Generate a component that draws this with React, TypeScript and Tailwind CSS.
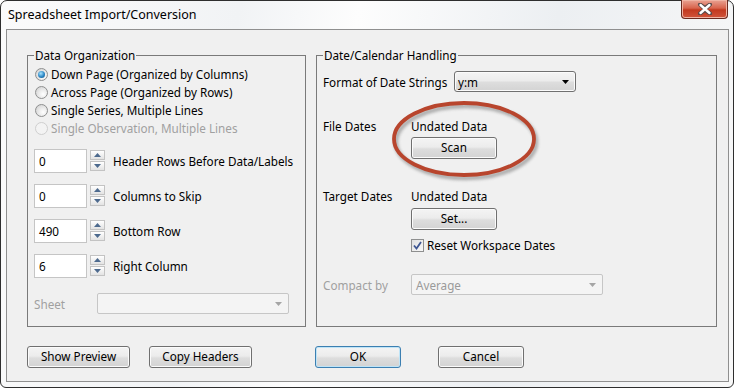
import React from 'react';

const btnBase =
  'flex h-[22px] items-center justify-center rounded-[3px] border text-[11.7px] leading-none text-black bg-[linear-gradient(#f4f4f4,#ececec_45%,#dddddd_55%,#d3d3d3)]';

function Button({ children, className = '' }: { children: React.ReactNode; className?: string }) {
  return (
    <div className={`${btnBase} border-[#707070] shadow-[inset_0_0_0_1px_#fbfbfb] ${className}`}>
      {children}
    </div>
  );
}

function Radio({ checked, disabled }: { checked?: boolean; disabled?: boolean }) {
  return (
    <span
      className={`flex h-[13px] w-[13px] shrink-0 items-center justify-center rounded-full border ${
        disabled
          ? 'border-[#cfcfcf] bg-[#f3f3f3]'
          : 'border-[#8e8f8f] bg-[radial-gradient(circle_at_65%_65%,#ffffff,#e4e4e4_55%,#c9c9c9)]'
      }`}
    >
      {checked && (
        <span className="h-[7px] w-[7px] rounded-full bg-[radial-gradient(circle_at_40%_35%,#a6e3ff,#2b86c4_55%,#0f4c7e)]" />
      )}
    </span>
  );
}

function Arrow({ up, color = '#4d6a8e' }: { up?: boolean; color?: string }) {
  return (
    <svg width="7" height="4" viewBox="0 0 7 4">
      <path d={up ? 'M0 4 L3.5 0 L7 4 Z' : 'M0 0 L3.5 4 L7 0 Z'} fill={color} />
    </svg>
  );
}

function SpinRow({ value, label }: { value: string; label: string }) {
  return (
    <div className="flex h-[24px] items-start">
      <div className="flex h-[24px] w-[53px] items-center border border-[#c5c5c5] bg-white pl-[4px] text-black">
        {value}
      </div>
      <div className="ml-[3px] mt-[1px] flex w-[15px] flex-col gap-[1px]">
        <div className="flex h-[10px] items-center justify-center border border-[#c3c3c3] bg-[linear-gradient(#ffffff,#e3e3e3)]">
          <Arrow up />
        </div>
        <div className="flex h-[10px] items-center justify-center border border-[#c3c3c3] bg-[linear-gradient(#ffffff,#e3e3e3)]">
          <Arrow />
        </div>
      </div>
      <span className="ml-[8px] self-center text-black">{label}</span>
    </div>
  );
}

function DisabledSelect({ text, className = '' }: { text?: string; className?: string }) {
  return (
    <div
      className={`flex h-[21px] items-center justify-between rounded-[2px] border border-[#c6c6c6] bg-[#f4f4f4] pl-[4px] pr-[6px] text-[#9a9a9a] ${className}`}
    >
      <span>{text}</span>
      <Arrow color="#a5a5a5" />
    </div>
  );
}

export default function App() {
  return (
    <div className="font-['Noto_Sans','Open_Sans',sans-serif] bg-white">
      <div className="flex h-[388px] w-[734px] flex-col rounded-t-[7px] rounded-b-[6px] border border-[#2e2e2e] bg-[linear-gradient(100deg,#fbfbfb_0%,#f1f3f5_30%,#fdfdfd_45%,#eceff2_70%,#f8f8f8_100%)]">
        {/* title bar */}
        <div className="flex h-[28px] items-start justify-between">
          <span className="ml-[7px] mt-[6px] text-[12.5px] leading-[16px] text-black">
            Spreadsheet Import/Conversion
          </span>
          <div className="-mt-[1px] mr-[5px] flex h-[19px] w-[47px] items-center justify-center rounded-b-[4px] border border-t-0 border-[#6a2a20] bg-[linear-gradient(#e9a393,#d8644d_45%,#c2391f_55%,#d1553c)] shadow-[inset_0_0_0_1px_#f0b4a4]">
            <svg width="16" height="12" viewBox="0 0 16 12">
              <path
                d="M3 1.5 L8 5 L13 1.5 M3 10.5 L8 7 L13 10.5 M3 1.5 L13 10.5 M13 1.5 L3 10.5"
                stroke="#5a4b4b"
                strokeWidth="4"
                strokeLinecap="round"
                fill="none"
              />
              <path
                d="M3.5 2 L12.5 10 M12.5 2 L3.5 10"
                stroke="#ffffff"
                strokeWidth="2.4"
                strokeLinecap="round"
                fill="none"
              />
            </svg>
          </div>
        </div>

        {/* client area */}
        <div className="relative mb-[5px] ml-[5px] mr-[4px] flex-1 border border-[#8f8f8f] bg-[#f0f0f0] pl-[20px] pt-[17px] text-[11.7px] leading-[16px] text-black">
          <div className="flex gap-[10px]">
            {/* Data Organization */}
            <fieldset className="h-[280px] w-[279px] border border-[#7a7a7a] pl-[6px]">
              <legend className="px-[1px]">Data Organization</legend>
              <div className="mt-[2px] flex flex-col">
                <div className="flex h-[18px] items-center gap-[3px] pl-[1px]">
                  <Radio checked />
                  <span>Down Page (Organized by Columns)</span>
                </div>
                <div className="flex h-[18px] items-center gap-[3px] pl-[1px]">
                  <Radio />
                  <span>Across Page (Organized by Rows)</span>
                </div>
                <div className="flex h-[18px] items-center gap-[3px] pl-[1px]">
                  <Radio />
                  <span>Single Series, Multiple Lines</span>
                </div>
                <div className="flex h-[18px] items-center gap-[3px] pl-[1px] text-[#a0a0a0]">
                  <Radio disabled />
                  <span>Single Observation, Multiple Lines</span>
                </div>
              </div>
              <div className="mt-[12px] flex flex-col gap-[11px]">
                <SpinRow value="0" label="Header Rows Before Data/Labels" />
                <SpinRow value="0" label="Columns to Skip" />
                <SpinRow value="490" label="Bottom Row" />
                <SpinRow value="6" label="Right Column" />
              </div>
              <div className="mt-[15px] flex items-center">
                <span className="w-[63px] text-[#a0a0a0]">Sheet</span>
                <DisabledSelect className="w-[192px]" />
              </div>
            </fieldset>

            {/* Date/Calendar Handling */}
            <fieldset className="h-[280px] w-[401px] border border-[#7a7a7a] pl-[6px]">
              <legend className="px-[1px]">Date/Calendar Handling</legend>
              <div className="mt-[8px] flex h-[21px] items-center">
                <span className="w-[131px]">Format of Date Strings</span>
                <div className="flex h-[21px] w-[122px] items-center justify-between rounded-[3px] border border-[#707070] bg-[linear-gradient(#f4f4f4,#ececec_45%,#dddddd_55%,#d3d3d3)] pl-[3px] pr-[6px] shadow-[inset_0_0_0_1px_#fbfbfb]">
                  <span>y:m</span>
                  <Arrow color="#000000" />
                </div>
              </div>

              <div className="mt-[26px] grid grid-cols-[88px_1fr]">
                <span>File Dates</span>
                <span>Undated Data</span>
                <div />
                <Button className="mt-[3px] h-[21px] w-[86px]">Scan</Button>
              </div>

              <div className="mt-[29px] grid grid-cols-[88px_1fr]">
                <span>Target Dates</span>
                <span>Undated Data</span>
                <div />
                <Button className="mt-[4px] h-[21px] w-[86px]">Set...</Button>
                <div />
                <div className="mt-[7px] flex h-[16px] items-center gap-[3px]">
                  <span className="flex h-[13px] w-[13px] items-center justify-center border border-[#8e8f8f] bg-[linear-gradient(135deg,#e0e0e0,#f8f8f8)]">
                    <svg width="9" height="9" viewBox="0 0 9 9">
                      <path d="M1 4.5 L3.5 7.5 L8 1" stroke="#3e5692" strokeWidth="1.8" fill="none" />
                    </svg>
                  </span>
                  <span>Reset Workspace Dates</span>
                </div>
              </div>

              <div className="mt-[21px] flex h-[21px] items-center">
                <span className="w-[88px] text-[#a0a0a0]">Compact by</span>
                <DisabledSelect text="Average" className="w-[192px]" />
              </div>
            </fieldset>
          </div>

          {/* bottom buttons */}
          <div className="mt-[19px] flex">
            <Button className="w-[103px]">Show Preview</Button>
            <Button className="ml-[19px] w-[103px]">Copy Headers</Button>
            <div
              className={`${btnBase} ml-[63px] w-[86px] border-[#3c7fb1] shadow-[inset_0_0_0_1px_#bfe4f7]`}
            >
              OK
            </div>
            <Button className="ml-[37px] w-[86px]">Cancel</Button>
          </div>

          {/* highlight ellipse drawn over the dialog */}
          <svg
            className="pointer-events-none absolute left-[373px] top-[66px]"
            width="166"
            height="94"
            viewBox="0 0 166 94"
          >
            <defs>
              <filter id="blur" x="-20%" y="-20%" width="140%" height="140%">
                <feGaussianBlur stdDeviation="1.8" />
              </filter>
            </defs>
            <ellipse cx="86" cy="46" rx="70" ry="36" fill="none" stroke="#8a8a8a" strokeWidth="4.5" opacity="0.65" filter="url(#blur)" />
            <ellipse cx="84" cy="43" rx="70" ry="36" fill="none" stroke="#b8452d" strokeWidth="3.8" />
          </svg>
        </div>
      </div>
    </div>
  );
}
